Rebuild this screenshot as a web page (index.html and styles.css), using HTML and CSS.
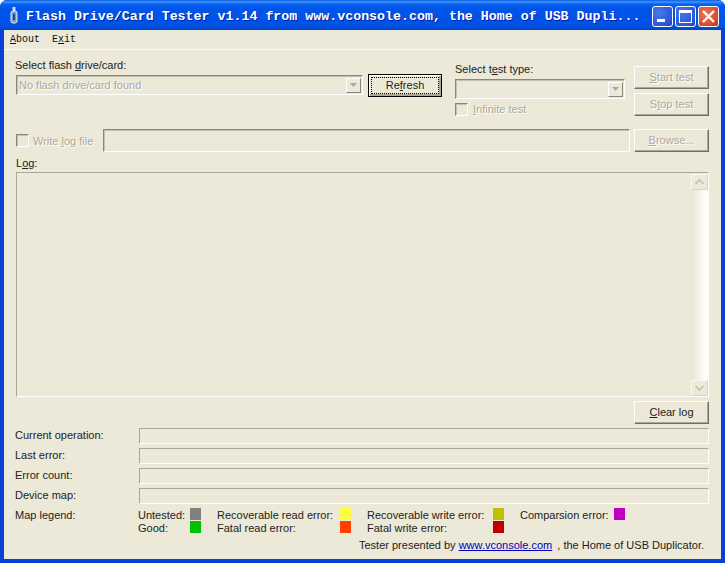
FILE: index.html
```html
<!DOCTYPE html>
<html lang="en">
<head>
<meta charset="utf-8">
<title>Flash Drive/Card Tester</title>
<link rel="stylesheet" href="styles.css">
</head>
<body>
<div class="window">
  <header class="titlebar">
    <svg class="app-icon" width="10" height="18" viewBox="0 0 10 18">
      <rect x="3.500" y="0" width="3" height="4" fill="#cfdcf2"/>
      <rect x="2" y="4" width="6" height="12" rx="2" fill="#7f99c8" stroke="#e6edf8" stroke-width="1"/>
      <rect x="4" y="7" width="2" height="6" fill="#21468f"/>
    </svg>
    <div class="title">Flash Drive/Card Tester v1.14 from www.vconsole.com, the Home of USB Dupli...</div>
    <div class="caption-buttons">
      <div class="cap cap-blue">
        <svg width="21" height="21" viewBox="0 0 21 21"><rect x="5" y="13" width="8" height="3" fill="#fff"/></svg>
      </div>
      <div class="cap cap-blue">
        <svg width="21" height="21" viewBox="0 0 21 21"><rect x="4.500" y="4.500" width="12" height="12" fill="none" stroke="#fff"/><rect x="4" y="4" width="13" height="3" fill="#fff"/></svg>
      </div>
      <div class="cap cap-red">
        <svg width="21" height="21" viewBox="0 0 21 21"><path d="M5 5l11 11M16 5L5 16" stroke="#fff" stroke-width="2.400" fill="none"/></svg>
      </div>
    </div>
  </header>
  <nav class="menubar">
    <span class="menu-item"><u>A</u>bout</span>
    <span class="menu-item">E<u>x</u>it</span>
  </nav>
  <main class="content">
    <section class="top">
      <div class="col-drive">
        <div class="label drive-label">Select flash <u>d</u>rive/card:</div>
        <div class="drive-row">
          <div class="combo combo-drive">
            <span class="combo-text">No flash drive/card found</span>
            <span class="combo-btn"><svg width="7" height="4" viewBox="0 0 7 4"><path d="M0 0h7L3.500 4z" fill="#aca899"/></svg></span>
          </div>
          <div class="btn btn-default"><span class="focus">Re<u>f</u>resh</span></div>
        </div>
      </div>
      <div class="col-type">
        <div class="label">Select t<u>e</u>st type:</div>
        <div class="combo combo-type">
          <span class="combo-text"></span>
          <span class="combo-btn"><svg width="7" height="4" viewBox="0 0 7 4"><path d="M0 0h7L3.500 4z" fill="#aca899"/></svg></span>
        </div>
        <div class="check-row infinite">
          <span class="check"></span>
          <span class="disabled-text"><u>I</u>nfinite test</span>
        </div>
      </div>
      <div class="col-actions">
        <div class="btn disabled-text"><span><u>S</u>tart test</span></div>
        <div class="btn disabled-text"><span>S<u>t</u>op test</span></div>
      </div>
    </section>

    <section class="log-file">
      <div class="check-row write-log">
        <span class="check"></span>
        <span class="disabled-text">Write <u>l</u>og file</span>
      </div>
      <div class="field log-path"></div>
      <div class="btn disabled-text"><span><u>B</u>rowse...</span></div>
    </section>

    <div class="label log-label">L<u>o</u>g:</div>
    <div class="log-box">
      <div class="scrollbar">
        <div class="sb-btn"><svg width="9" height="6" viewBox="0 0 9 6"><path d="M0.500 5L4.500 1l4 4" fill="none" stroke="#c4c1b2" stroke-width="1.600"/></svg></div>
        <div class="sb-track"></div>
        <div class="sb-btn"><svg width="9" height="6" viewBox="0 0 9 6"><path d="M0.500 1L4.500 5l4-4" fill="none" stroke="#c4c1b2" stroke-width="1.600"/></svg></div>
      </div>
    </div>
    <div class="clear-row"><div class="btn"><span><u>C</u>lear log</span></div></div>

    <section class="status">
      <div class="status-row"><span class="status-label">Current operation:</span><div class="field status-field"></div></div>
      <div class="status-row"><span class="status-label">Last error:</span><div class="field status-field"></div></div>
      <div class="status-row"><span class="status-label">Error count:</span><div class="field status-field"></div></div>
      <div class="status-row"><span class="status-label">Device map:</span><div class="field status-field"></div></div>
    </section>

    <section class="legend">
      <span class="status-label">Map legend:</span>
      <div class="legend-grid">
        <span>Untested:</span><i class="swatch gray"></i>
        <span>Recoverable read error:</span><i class="swatch yellow"></i>
        <span>Recoverable write error:</span><i class="swatch olive"></i>
        <span>Comparsion error:</span><i class="swatch magenta"></i>
        <span>Good:</span><i class="swatch green"></i>
        <span>Fatal read error:</span><i class="swatch orange"></i>
        <span>Fatal write error:</span><i class="swatch red"></i>
      </div>
    </section>
    <footer class="credit">Tester presented by <a href="#">www.vconsole.com</a> <span class="credit-tail">, the Home of USB Duplicator.</span></footer>
  </main>
</div>
</body>
</html>
```
FILE: styles.css
```css
* { box-sizing: border-box; }
html, body { margin: 0; padding: 0; background: #fff; }
body { width: 725px; height: 563px; overflow: hidden; font-family: "Liberation Sans", Arial, sans-serif; font-size: 11px; color: #222; }
u { text-underline-offset: 1px; }

.window { width: 725px; height: 563px; display: flex; flex-direction: column; background: #0a3fd8; border-radius: 7px 7px 0 0; overflow: hidden; }

.titlebar { height: 30px; flex: none; display: flex; align-items: center; padding: 0 6px 0 9px;
  background: linear-gradient(#0a5ce0 0, #3d95ff 2px, #0a62f0 4px, #0055e8 8px, #0053ea 20px, #0050e0 27px, #0043c4 30px); }
.app-icon { flex: none; margin: 2px 7px 0 0; }
.title { flex: 1; white-space: nowrap; overflow: hidden; color: #fff; font: bold 13.3px/16px "Liberation Mono", monospace; text-shadow: 1px 1px 0 #00209c; padding-top: 3px; }
.caption-buttons { display: flex; gap: 2px; flex: none; margin-top: 3px; }
.cap { width: 21px; height: 21px; border: 1px solid #fff; border-radius: 3px; display: block; overflow: hidden; }
.cap svg { display: block; margin: -1px; }
.cap-blue { background: radial-gradient(circle at 30% 30%, #4a78e8, #2a58d8 70%, #1a3fb0); }
.cap-red { background: radial-gradient(circle at 35% 35%, #e8795a, #d24a2a 70%, #b03010); }

.menubar { height: 20px; flex: none; margin: 0 4px; background: #ece9d8; border-bottom: 1px solid #fbfaf4; display: flex; gap: 12px; padding: 3px 0 0 6px; font: 10px/14px "Liberation Mono", monospace; color: #111; }

.content { flex: 1; margin: 0 4px 4px; background: #ece9d8; padding: 0 12px; display: flex; flex-direction: column; }

.label { line-height: 14px; height: 14px; }
.disabled-text { color: #aca899; text-shadow: 1px 1px 0 #fff; }

.top { display: flex; height: 79px; }
.col-drive { width: 426px; padding-top: 8px; }
.drive-label { margin-left: -1px; }
.drive-row { display: flex; justify-content: space-between; margin-top: 2px; }
.combo { display: flex; align-items: center; justify-content: space-between; background: #ece9d8; border: 1px solid; border-color: #8a8778 #fff #fff #8a8778; box-shadow: inset 1px 1px 0 #c5c2b0; padding: 1px 1px 1px 2px; }
.combo-drive { width: 347px; height: 20px; margin-top: 1px; }
.combo-text { color: #aca899; text-shadow: 1px 1px 0 #fff; white-space: nowrap; margin-top: -1px; }
.combo-btn { width: 15px; height: 15px; display: flex; align-items: center; justify-content: center; background: #ece9d8; border: 1px solid; border-color: #fff #8a8778 #8a8778 #fff; }

.btn { width: 75px; height: 23px; display: flex; align-items: center; justify-content: center; padding-bottom: 2px; background: #ece9d8; border: 1px solid; border-color: #fff #716f64 #716f64 #fff; box-shadow: inset -1px -1px 0 #aca899; line-height: 14px; white-space: nowrap; }
.btn-default { border: 1px solid #000; box-shadow: inset 1px 1px 0 #fff, inset -2px -2px 0 #aca899; width: 74px; padding: 2px; }
.focus { flex: 1; height: 17px; display: flex; align-items: center; justify-content: center; border: 1px dotted #000; padding-bottom: 1px; }
.focus u { display: inline; }

.col-type { width: 170px; margin-left: 13px; padding-top: 12px; }
.combo-type { width: 170px; height: 20px; margin-top: 3px; justify-content: flex-end; }
.check-row { display: flex; align-items: center; }
.check { width: 13px; height: 13px; flex: none; border: 1px solid; border-color: #8a8778 #fff #fff #8a8778; box-shadow: inset 1px 1px 0 #c5c2b0; }
.infinite { margin-top: 3px; height: 14px; gap: 5px; }

.col-actions { width: 75px; margin-left: 9px; padding-top: 16px; display: flex; flex-direction: column; gap: 4px; }

.log-file { display: flex; align-items: center; height: 23px; }
.write-log { width: 87px; gap: 4px; flex: none; }
.field { background: #ece9d8; border: 1px solid; border-color: #aca899 #fff #fff #aca899; }
.log-path { width: 527px; height: 23px; margin-right: 4px; border-color: #8a8778 #fff #fff #8a8778; box-shadow: inset 1px 1px 0 #c5c2b0; }

.log-label { margin-top: 4px; }
.log-box { width: 693px; height: 225px; margin-top: 2px; background: #ece9d8; border: 1px solid; border-color: #aca899 #fff #fff #aca899; display: flex; justify-content: flex-end; }
.scrollbar { width: 17px; margin: 1px 0 0; display: flex; flex-direction: column; }
.sb-btn { height: 16px; flex: none; display: flex; align-items: center; justify-content: center; background: #ece9d8; border: 1px solid; border-color: #f8f7f0 #d6d3c2 #d6d3c2 #f8f7f0; }
.sb-track { flex: 1; background: linear-gradient(90deg, #e8e5d4, #fbfaf5 70%, #fff); }

.clear-row { display: flex; justify-content: flex-end; margin-top: 4px; width: 693px; }

.status { display: flex; flex-direction: column; gap: 4px; margin-top: 4px; }
.status-row { display: flex; height: 16px; align-items: center; }
.status-label { width: 123px; flex: none; margin-left: -1px; line-height: 14px; }
.status-field { width: 570px; height: 16px; margin-left: 1px; }
.status-row .status-label { margin-top: -2px; }

.legend { display: flex; margin-top: 4px; }
.legend-grid { display: grid; grid-template-columns: 52px 27px 123px 27px 126px 27px 94px 11px; grid-auto-rows: 13px; line-height: 13px; }
.legend-grid span { white-space: nowrap; padding-top: 1px; }
.swatch { display: block; width: 11px; height: 12px; }
.gray { background: #808080; }
.green { background: #00c000; }
.yellow { background: #ffff40; }
.orange { background: #ff4000; }
.olive { background: #c0c000; }
.red { background: #c00000; }
.magenta { background: #c000c0; }

.credit { margin-top: 4px; text-align: right; padding-right: 5px; width: 693px; line-height: 14px; white-space: nowrap; }
.credit a { color: #0000c0; }
.credit-tail { margin-left: 2px; }
```
